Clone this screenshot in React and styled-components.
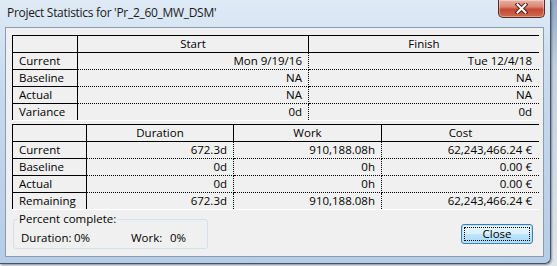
import React from 'react';
import styled, { createGlobalStyle } from 'styled-components';

const GlobalStyle = createGlobalStyle`
  html, body { margin: 0; padding: 0; }
  body {
    width: 557px;
    height: 266px;
    overflow: hidden;
    background: linear-gradient(180deg, #8fa8c3 0%, #c4d0dd 25%, #dfe5ec 100%);
    font-family: "Open Sans", "DejaVu Sans", sans-serif;
    color: #000;
  }
`;

const Window = styled.div`
  width: 551px;
  height: 264px;
  box-sizing: border-box;
  display: flex;
  flex-direction: column;
  padding: 0 6px 6px 5px;
  background: linear-gradient(180deg, #dfeaf6 0%, #c6d9ee 35%, #b6cde7 100%);
  border-right: 1px solid #3f536a;
  border-bottom: 1px solid #3f536a;
  border-bottom-right-radius: 6px;
  box-shadow: 1px 1px 2px rgba(0, 0, 0, 0.35);
`;

const TitleBar = styled.div`
  height: 27px;
  display: flex;
  align-items: flex-start;
  justify-content: space-between;
`;

const Title = styled.div`
  padding: 5px 0 0 2px;
  font-size: 12px;
  letter-spacing: -0.3px;
  line-height: 16px;
  color: #1a1a1a;
`;

const CloseX = styled.div`
  width: 47px;
  height: 18px;
  margin-right: -1px;
  box-sizing: border-box;
  display: flex;
  align-items: center;
  justify-content: center;
  border: 1px solid #5b2a22;
  border-top: none;
  border-radius: 0 0 5px 5px;
  background: linear-gradient(180deg, #eab3a5 0%, #d98570 40%, #c34a32 55%, #cf6a4c 100%);
  box-shadow: inset 0 0 0 1px rgba(255, 255, 255, 0.35);
`;

const Client = styled.div`
  flex: 1;
  display: flex;
  flex-direction: column;
  border: 1px solid #8b9cb0;
  background: #f0f0f0;
  padding: 7px 4px 6px 6px;
`;

const Grid = styled.div`
  display: grid;
  grid-template-columns: ${p => p.$cols};
  border-top: 1px solid #000;
  border-bottom: 1px solid #fff;
  margin-bottom: ${p => p.$gap || 0}px;
  font-size: 11.5px;
  line-height: 16px;
`;

const Corner = styled.div`
  height: 16px;
  border-left: 1px solid #000;
  border-right: 1px solid #000;
  border-bottom: 1px solid #000;
`;

const Head = styled.div`
  height: 16px;
  text-align: center;
  border-bottom: 1px solid #000;
  border-right: ${p => (p.$last ? 'none' : '1px solid #000')};
`;

const Label = styled.div`
  height: 16px;
  padding-left: 6px;
  border-left: 1px solid #000;
  border-right: 1px solid #000;
  border-bottom: ${p => (p.$last ? 'none' : '1px solid #000')};
`;

const Value = styled.div`
  height: 16px;
  text-align: right;
  padding-right: ${p => (p.$last ? 7 : 6)}px;
  border-bottom: ${p => (p.$lastRow ? 'none' : '1px dotted #000')};
  border-right: ${p => (p.$last ? 'none' : '1px dotted #000')};
  white-space: nowrap;
`;

const Footer = styled.div`
  flex: 1;
  display: flex;
  align-items: flex-end;
  justify-content: space-between;
  padding: 0 1px 0 1px;
`;

const Group = styled.fieldset`
  margin: 0 0 1px 0;
  width: 195px;
  box-sizing: border-box;
  padding: 4px 3px 3px 3px;
  border: 1px solid #d5dfe5;
  border-radius: 3px;
  font-size: 11.5px;
`;

const Legend = styled.legend`
  padding: 0 1px;
  margin-left: 1px;
  line-height: 14px;
`;

const StatRow = styled.div`
  display: flex;
  line-height: 15px;
  padding-left: 4px;
`;

const Stat = styled.div`
  display: flex;
  width: ${p => p.$width}px;
`;

const StatLabel = styled.span`
  width: ${p => p.$width}px;
`;

const Button = styled.button`
  width: 72px;
  height: 20px;
  margin: 0 5px 6px 0;
  padding: 2px;
  box-sizing: border-box;
  display: flex;
  border: 1px solid #3c7fb1;
  border-radius: 3px;
  background: linear-gradient(180deg, #eaf6fd 0%, #d9f0fc 48%, #bee6fd 52%, #a7d9f5 100%);
  box-shadow: inset 0 0 0 1px #b7e4fa;
  font-family: "Open Sans", "DejaVu Sans", sans-serif;
  font-size: 11.5px;
  color: #000;
`;

const Focus = styled.span`
  flex: 1;
  display: flex;
  align-items: center;
  justify-content: center;
  border: 1px dotted #000;
  line-height: 12px;
`;

const dates = [
  ['Current', 'Mon 9/19/16', 'Tue 12/4/18'],
  ['Baseline', 'NA', 'NA'],
  ['Actual', 'NA', 'NA'],
  ['Variance', '0d', '0d'],
];

const totals = [
  ['Current', '672.3d', '910,188.08h', '62,243,466.24 €'],
  ['Baseline', '0d', '0h', '0.00 €'],
  ['Actual', '0d', '0h', '0.00 €'],
  ['Remaining', '672.3d', '910,188.08h', '62,243,466.24 €'],
];

function StatsGrid({ cols, heads, rows, gap }) {
  return (
    <Grid $cols={cols} $gap={gap}>
      <Corner />
      {heads.map((h, i) => (
        <Head key={h} $last={i === heads.length - 1}>{h}</Head>
      ))}
      {rows.map((row, r) => {
        const lastRow = r === rows.length - 1;
        return (
          <React.Fragment key={row[0]}>
            <Label $last={lastRow}>{row[0]}</Label>
            {row.slice(1).map((v, c) => (
              <Value key={c} $lastRow={lastRow} $last={c === row.length - 2}>{v}</Value>
            ))}
          </React.Fragment>
        );
      })}
    </Grid>
  );
}

export default function App() {
  return (
    <>
      <GlobalStyle />
      <Window>
        <TitleBar>
          <Title>Project Statistics for 'Pr_2_60_MW_DSM'</Title>
          <CloseX>
            <svg width="13" height="11" viewBox="0 0 13 11">
              <path d="M2.5 1.5 L10.5 9.5 M10.5 1.5 L2.5 9.5" stroke="#4a2018" strokeWidth="4" strokeLinecap="square" />
              <path d="M2.5 1.5 L10.5 9.5 M10.5 1.5 L2.5 9.5" stroke="#fff" strokeWidth="2" strokeLinecap="square" />
            </svg>
          </CloseX>
        </TitleBar>
        <Client>
          <StatsGrid cols="66px 231px 1fr" heads={['Start', 'Finish']} rows={dates} gap={3} />
          <StatsGrid cols="75px 147px 148px 1fr" heads={['Duration', 'Work', 'Cost']} rows={totals} />
          <Footer>
            <Group>
              <Legend>Percent complete:</Legend>
              <StatRow>
                <Stat $width={110}>
                  <StatLabel $width={53}>Duration:</StatLabel>
                  <span>0%</span>
                </Stat>
                <Stat $width={70}>
                  <StatLabel $width={39}>Work:</StatLabel>
                  <span>0%</span>
                </Stat>
              </StatRow>
            </Group>
            <Button>
              <Focus>Close</Focus>
            </Button>
          </Footer>
        </Client>
      </Window>
    </>
  );
}
